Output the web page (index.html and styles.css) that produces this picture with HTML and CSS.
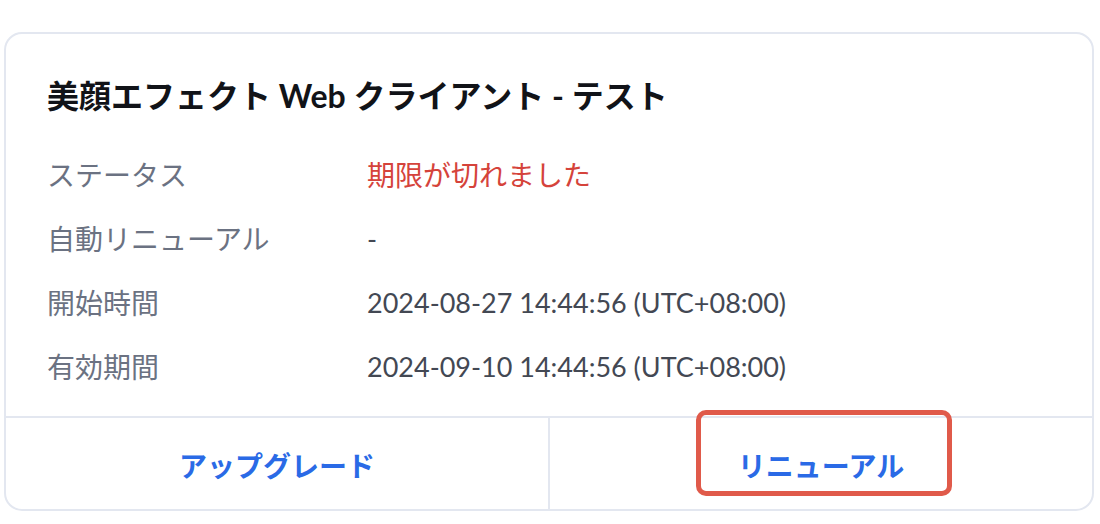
FILE: index.html
```html
<!DOCTYPE html>
<html lang="ja">
<head>
    <meta charset="UTF-8">
    <title>サブスクリプション</title>
    <link rel="stylesheet" href="styles.css">
</head>
<body>
    <div class="plan-card">
        <div class="plan-body">
            <h2 class="plan-title">美顔エフェクト Web クライアント - テスト</h2>
            <div class="plan-row">
                <span class="plan-label">ステータス</span>
                <span class="plan-value expired">期限が切れました</span>
            </div>
            <div class="plan-row">
                <span class="plan-label">自動リニューアル</span>
                <span class="plan-value">-</span>
            </div>
            <div class="plan-row">
                <span class="plan-label">開始時間</span>
                <span class="plan-value">2024-08-27 14:44:56 (UTC+08:00)</span>
            </div>
            <div class="plan-row">
                <span class="plan-label">有効期間</span>
                <span class="plan-value">2024-09-10 14:44:56 (UTC+08:00)</span>
            </div>
        </div>
        <div class="plan-actions">
            <a href="#" class="plan-action">アップグレード</a>
            <a href="#" class="plan-action">リニューアル</a>
        </div>
        <div class="highlight-box"></div>
    </div>
</body>
</html>
```

FILE: styles.css
```css
* {
    margin: 0;
    padding: 0;
    box-sizing: border-box;
}

body {
    font-family: Lato, "Noto Sans CJK JP", sans-serif;
    background: #fff;
    padding: 32px 6px 13px 4px;
}

.plan-card {
    position: relative;
    border: 2px solid #e3e7f0;
    border-radius: 18px;
    background: #fff;
}

.plan-body {
    padding: 40px 41px 18px;
}

.plan-title {
    font-size: 32px;
    line-height: 44px;
    font-weight: 700;
    color: #111318;
    margin-bottom: 24px;
}

.plan-row {
    display: flex;
    align-items: center;
    height: 64px;
    font-size: 28px;
}

.plan-label {
    width: 320px;
    color: #6b7282;
}

.plan-value {
    color: #434853;
    font-size: 27px;
}

.plan-value.expired {
    color: #d5433b;
    font-size: 28px;
}

.plan-actions {
    display: flex;
    border-top: 2px solid #e3e7f0;
    height: 93px;
}

.plan-action {
    flex: 1;
    display: flex;
    align-items: center;
    justify-content: center;
    font-size: 28px;
    font-weight: 700;
    color: #2a6ae6;
    text-decoration: none;
    padding-top: 2px;
}

.plan-action + .plan-action {
    border-left: 2px solid #e3e7f0;
}

.highlight-box {
    position: absolute;
    left: 690px;
    top: 376px;
    width: 256px;
    height: 86px;
    border: 5px solid #e05a4a;
    border-radius: 10px;
    pointer-events: none;
}
```
